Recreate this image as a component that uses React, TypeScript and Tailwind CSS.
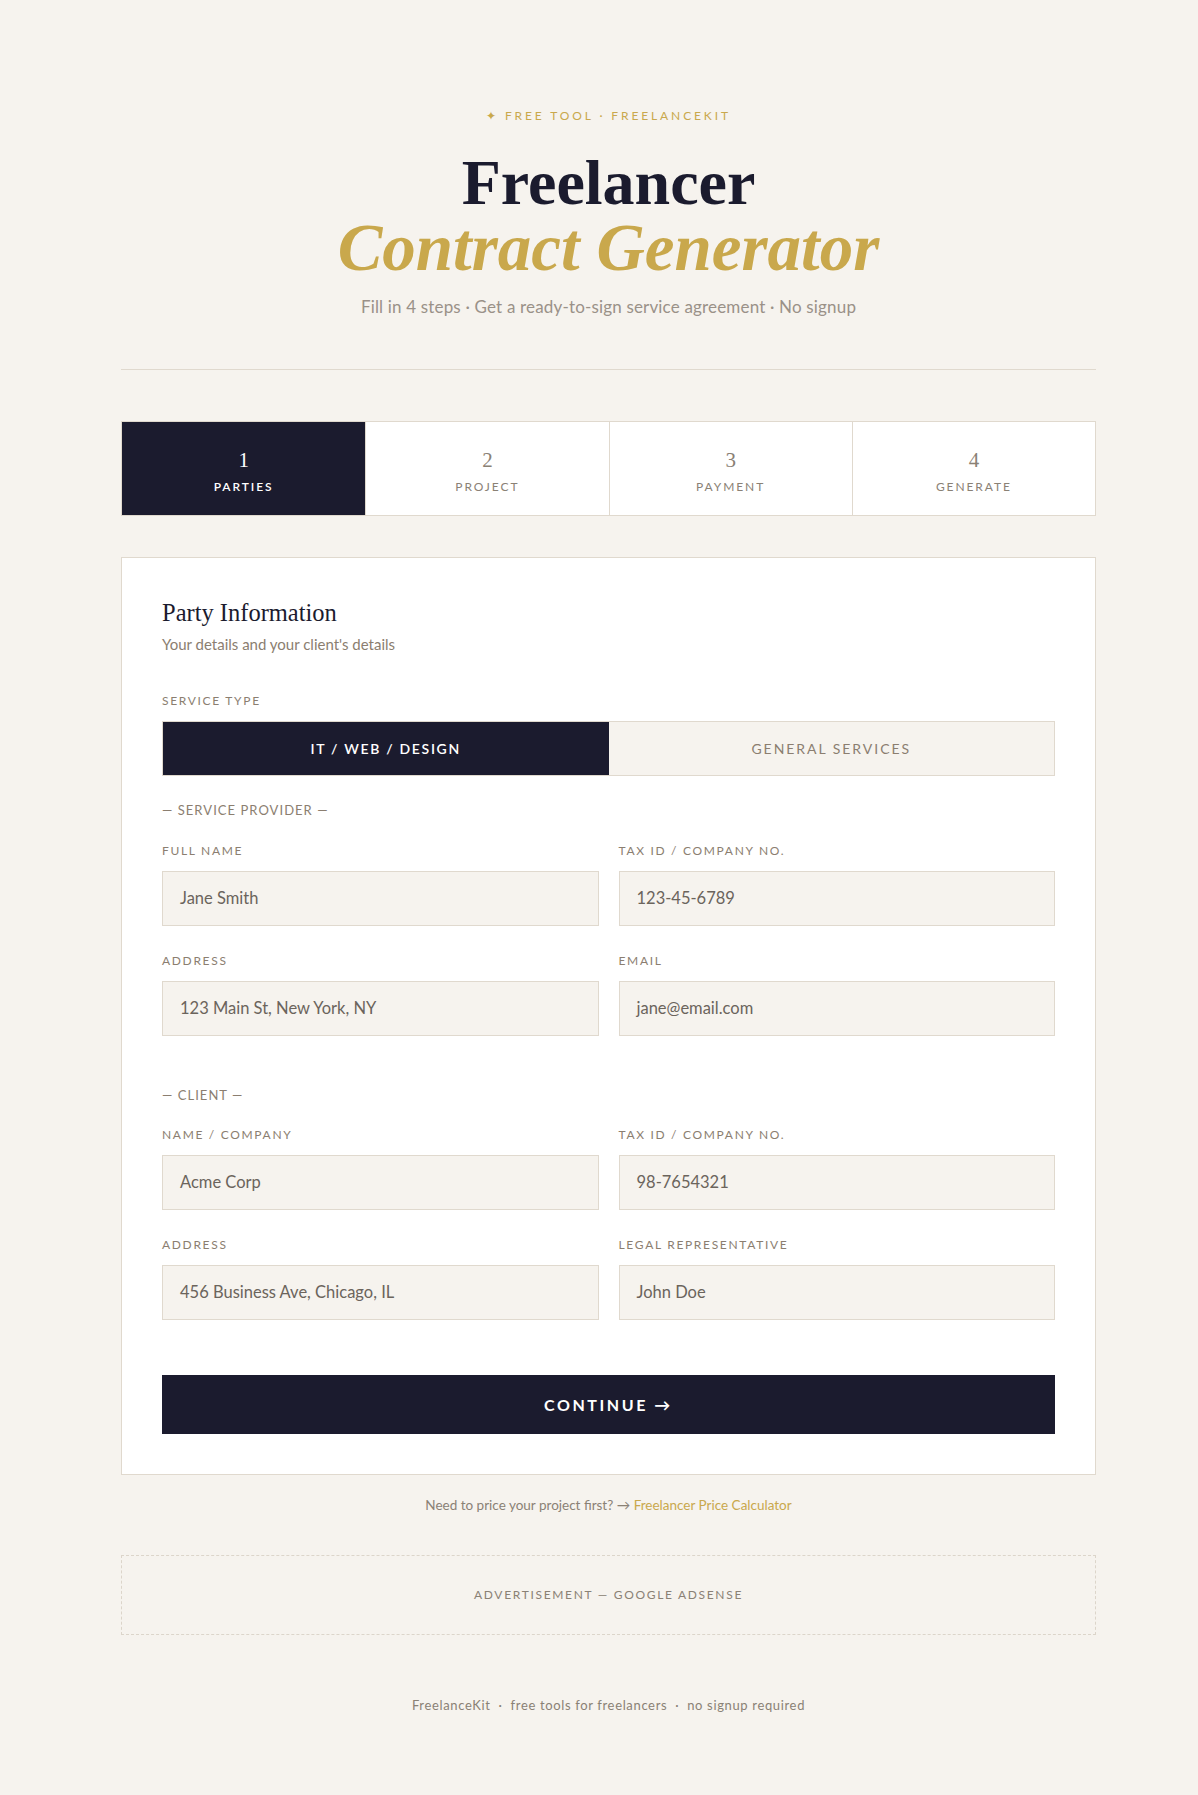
import React from "react";

const serif = "font-['Liberation_Serif','Times_New_Roman',serif]";
const sans = "font-['Lato','Open_Sans',sans-serif]";

const steps = [
  { n: "1", label: "PARTIES" },
  { n: "2", label: "PROJECT" },
  { n: "3", label: "PAYMENT" },
  { n: "4", label: "GENERATE" },
];

function Field({ label, value }: { label: string; value: string }) {
  return (
    <div>
      <div className="mb-[12px] text-[12px] leading-[16px] tracking-[0.14em] text-[#8b7e70]">{label}</div>
      <div className="flex h-[55px] items-center border border-[#e0d9ce] bg-[#f6f3ee] px-[17px] text-[16.5px] text-[#6b645c]">
        {value}
      </div>
    </div>
  );
}

function SectionTitle({ children }: { children: React.ReactNode }) {
  return (
    <div className="text-[13px] leading-[16px] tracking-[0.08em] text-[#8b7e70]">— {children} —</div>
  );
}

export default function App() {
  const active = 0;

  return (
    <div className={`min-h-screen bg-[#f6f3ee] pl-[19px] ${sans}`}>
      <div className="mx-auto w-[975px] pb-[80px] pt-[108px]">
        {/* header */}
        <header className="text-center">
          <div className="text-[12px] leading-[16px] tracking-[0.24em] text-[#c9a84c]">✦ FREE TOOL · FREELANCEKIT</div>
          <h1 className={`${serif} mt-[26px] text-[64px] font-bold leading-[65px] text-[#1b1b2e]`}>
            <span className="block">Freelancer</span>
            <em className="block text-[67px] leading-[65px] text-[#c9a84c]">Contract Generator</em>
          </h1>
          <p className="mt-[15px] text-[17px] leading-[24px] tracking-[0.01em] text-[#9a9188]">
            Fill in 4 steps · Get a ready-to-sign service agreement · No signup
          </p>
        </header>

        <div className="mt-[50px] h-px bg-[#e0d9ce]" />

        {/* steps */}
        <div className="mt-[51px] grid h-[95px] grid-cols-4 border border-[#e0d9ce] bg-white">
          {steps.map((s, i) => (
            <div
              key={s.n}
              className={`flex flex-col items-center justify-center gap-[7px] pt-[5px] ${i > 0 ? "border-l border-[#e0d9ce]" : ""} ${
                i === active ? "bg-[#1b1b2e] text-white" : "text-[#8a8175]"
              }`}
            >
              <div className={`${serif} text-[21px] leading-[24px]`}>{s.n}</div>
              <div className={`text-[12px] leading-[16px] tracking-[0.16em] ${i === active ? "font-semibold" : ""}`}>{s.label}</div>
            </div>
          ))}
        </div>

        {/* form card */}
        <div className="mt-[41px] border border-[#e0d9ce] bg-white p-[40px]">
          <h2 className={`${serif} text-[24.5px] leading-[30px] text-[#1b1b2e]`}>Party Information</h2>
          <p className="mt-[6px] text-[15px] leading-[20px] text-[#8b7e70]">Your details and your client's details</p>

          <div className="mt-[39px] text-[12px] leading-[16px] tracking-[0.14em] text-[#8b7e70]">SERVICE TYPE</div>
          <div className="mt-[12px] grid h-[55px] grid-cols-2 border border-[#e0d9ce]">
            <button className="bg-[#1b1b2e] text-[14px] font-semibold tracking-[0.12em] text-white">IT / WEB / DESIGN</button>
            <button className="bg-[#f6f3ee] text-[14px] tracking-[0.14em] text-[#8b7e70]">GENERAL SERVICES</button>
          </div>

          <div className="mt-[26px]">
            <SectionTitle>SERVICE PROVIDER</SectionTitle>
          </div>
          <div className="mt-[25px] grid grid-cols-2 gap-x-[20px] gap-y-[27px]">
            <Field label="FULL NAME" value="Jane Smith" />
            <Field label="TAX ID / COMPANY NO." value="123-45-6789" />
            <Field label="ADDRESS" value="123 Main St, New York, NY" />
            <Field label="EMAIL" value="jane@email.com" />
          </div>

          <div className="mt-[51px]">
            <SectionTitle>CLIENT</SectionTitle>
          </div>
          <div className="mt-[24px] grid grid-cols-2 gap-x-[20px] gap-y-[27px]">
            <Field label="NAME / COMPANY" value="Acme Corp" />
            <Field label="TAX ID / COMPANY NO." value="98-7654321" />
            <Field label="ADDRESS" value="456 Business Ave, Chicago, IL" />
            <Field label="LEGAL REPRESENTATIVE" value="John Doe" />
          </div>

          <button className="mt-[55px] flex h-[59px] w-full items-center justify-center bg-[#1b1b2e] text-[16px] font-bold tracking-[0.16em] text-white">
            CONTINUE →
          </button>
        </div>

        <p className="mt-[20px] text-center text-[13.5px] leading-[20px] text-[#8a8175]">
          Need to price your project first? → <a className="text-[#c9a84c]">Freelancer Price Calculator</a>
        </p>

        <div className="mt-[40px] flex h-[80px] items-center justify-center border border-dashed border-[#dcd5ca] text-[12px] tracking-[0.14em] text-[#8a8175]">
          ADVERTISEMENT — GOOGLE ADSENSE
        </div>

        <footer className="mt-[62px] text-center text-[13px] leading-[16px] tracking-[0.05em] text-[#8a8175]">
          FreelanceKit &nbsp;·&nbsp; free tools for freelancers &nbsp;·&nbsp; no signup required
        </footer>
      </div>
    </div>
  );
}
